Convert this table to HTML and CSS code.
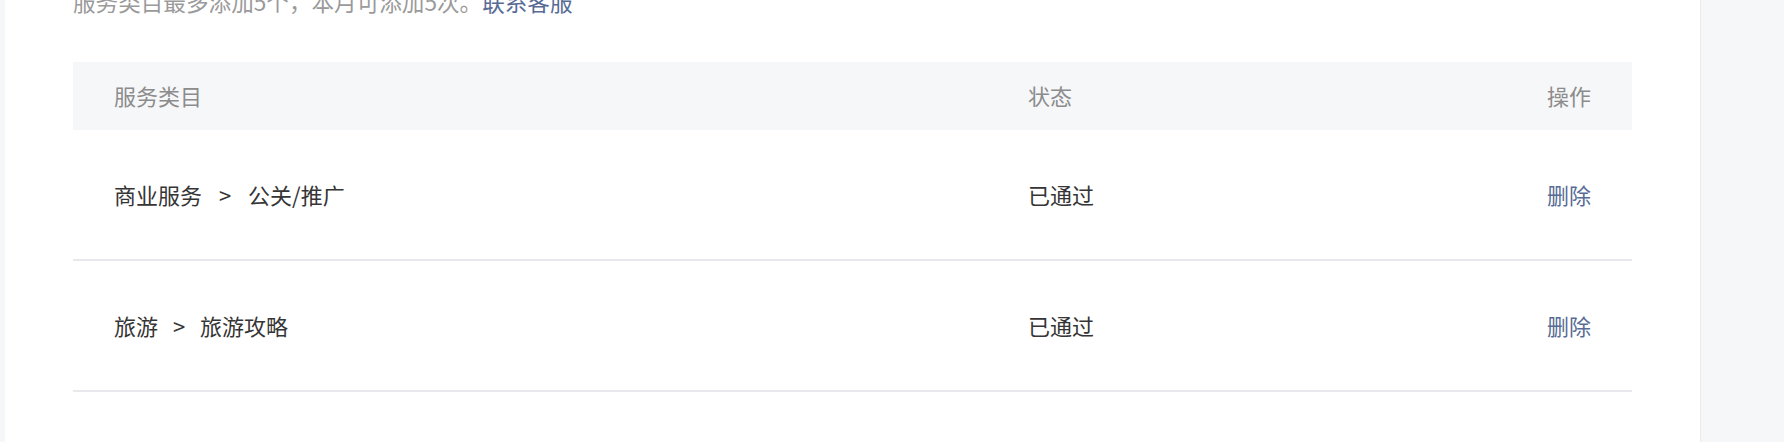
FILE: index.html
```html
<!DOCTYPE html>
<html lang="zh-CN">
<head>
<meta charset="utf-8">
<title>服务类目</title>
<link rel="stylesheet" href="styles.css">
</head>
<body>
<div class="gutter"></div>
<main class="panel">
  <p class="tip">服务类目最多添加5个，本月可添加5次。<a class="link" href="#">联系客服</a></p>
  <div class="table">
    <div class="row head">
      <div class="cell">服务类目</div>
      <div class="cell">状态</div>
      <div class="cell act">操作</div>
    </div>
    <div class="row body">
      <div class="cell">商业服务<span class="sep">&gt;</span>公关/推广</div>
      <div class="cell">已通过</div>
      <div class="cell act"><a class="link" href="#">删除</a></div>
    </div>
    <div class="row body">
      <div class="cell">旅游<span class="sep sep-narrow">&gt;</span>旅游攻略</div>
      <div class="cell">已通过</div>
      <div class="cell act"><a class="link" href="#">删除</a></div>
    </div>
  </div>
</main>
<aside class="side"></aside>
</body>
</html>
```
FILE: styles.css
```css
html, body {
  margin: 0;
  padding: 0;
}
body {
  display: flex;
  height: 442px;
  overflow: hidden;
  background: #f6f7f9;
  font-family: "Noto Sans CJK SC", "Noto Sans", sans-serif;
  font-size: 22px;
  color: #353535;
}
.gutter {
  width: 5px;
  flex: none;
  background: #f6f7f9;
}
.panel {
  flex: none;
  width: 1559px;
  background: #fff;
  border-right: 1px solid #ebebed;
  padding: 0 68px;
}
.side {
  flex: 1;
  background: #f6f7f9;
}
.tip {
  margin: -13px 0 45px 0;
  line-height: 30px;
  font-size: 22.6px;
  color: #9a9a9a;
  white-space: nowrap;
}
.link {
  color: #576b95;
  text-decoration: none;
}
.table {
  width: 1559px;
}
.row {
  display: grid;
  grid-template-columns: 914px 1fr auto;
  align-items: center;
  padding: 0 41px;
}
.head {
  height: 68px;
  background: #f6f7f9;
  color: #8c8c8c;
}
.body {
  height: 129px;
  border-bottom: 2px solid #e9e9ed;
}
.row .cell {
  line-height: 30px;
  padding-bottom: 2px;
}
.act {
  text-align: right;
}
.sep {
  display: inline-block;
  width: 46px;
  text-align: center;
}
.sep-narrow {
  width: 42px;
}
```
